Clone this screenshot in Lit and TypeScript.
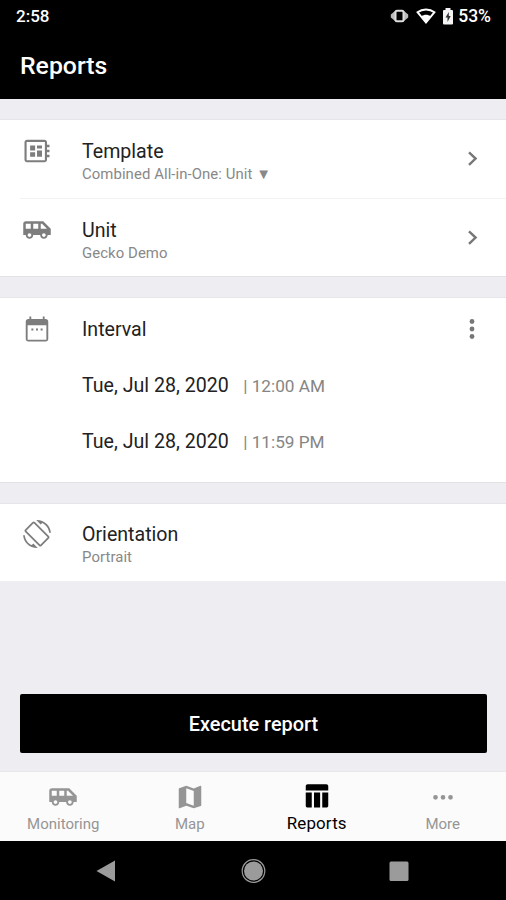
import { LitElement, html, css, svg } from "lit";
import { customElement } from "lit/decorators.js";

const BOARD = "M22 9V7h-2V5c0-1.1-.9-2-2-2H4c-1.1 0-2 .9-2 2v14c0 1.1.9 2 2 2h14c1.1 0 2-.9 2-2v-2h2v-2h-2v-2h2v-2h-2V9h2zm-3.7 10.3h-14.600v-14.600h14.600v14.600zM6.500 13h4v3.500h-4zm5.500-5.500h4v2.500h-4zM6.500 7.500h4v4h-4zm5.500 4h4v5h-4z";
const VAN = "M17 5H3c-1.100 0-2 .89-2 2v9h2c0 1.650 1.340 3 3 3s3-1.350 3-3h5.500c0 1.650 1.340 3 3 3s3-1.350 3-3H23v-5l-6-6zM3 11V7h4v4H3zm3 6.500c-.83 0-1.500-.67-1.500-1.500s.67-1.500 1.500-1.500 1.500.67 1.500 1.500-.67 1.500-1.500 1.500zm7-6.500H9V7h4v4zm4.500 6.500c-.83 0-1.500-.67-1.500-1.500s.67-1.500 1.500-1.500 1.500.67 1.500 1.500-.67 1.500-1.500 1.500zM15 11V7h1l4 4h-5z";
const CALENDAR = "M7.500 11.500v1.600h1.600v-1.600zm3.700 0v1.600h1.600v-1.600zm3.700 0v1.600h1.600v-1.600zM19 4h-.900V2h-1.500v2H7.400V2H5.900v2H5c-1.110 0-2 .9-2 2v14c0 1.100.89 2 2 2h14c1.100 0 2-.9 2-2V6c0-1.100-.9-2-2-2zm.500 16.500h-15V9h15v11.500z";
const ROTATE = "M16.480 2.520c3.270 1.550 5.610 4.720 5.970 8.480h1.500C23.440 4.840 18.290 0 12 0l-.66.03 3.810 3.810 1.330-1.320zm-6.250-.77c-.59-.59-1.540-.59-2.120 0L1.750 8.110c-.59.59-.59 1.540 0 2.120l12.020 12.020c.59.59 1.540.59 2.120 0l6.360-6.360c.59-.59.59-1.540 0-2.120L10.230 1.750zm4.600 19.440L2.810 9.170l6.360-6.360 12.020 12.020-6.360 6.360zm-7.310.29C4.250 19.940 1.910 16.760 1.550 13H.05C.56 19.160 5.710 24 12 24l.66-.03-3.810-3.810-1.330 1.320z";
const MAP = "M20.500 3l-.16.03L15 5.100 9 3 3.360 4.900c-.21.07-.36.25-.36.48V20.500c0 .28.22.5.5.5l.16-.03L9 18.900l6 2.100 5.640-1.900c.21-.07.36-.25.36-.48V3.500c0-.28-.22-.5-.5-.5zM15 19l-6-2.110V5l6 2.110V19z";
const TABLE = "M4.500 2.500h15c.8 0 1.500.7 1.500 1.500v3.500H3V4c0-.8.700-1.500 1.500-1.500zM3 9.200h4.800v12H4.500c-.8 0-1.500-.7-1.500-1.500zM9.600 9.200h4.900v12h-4.900zM16.200 9.200H21v10.500c0 .8-.7 1.500-1.500 1.500h-3.300z";
const MORE = "M6 10.300a1.900 1.900 0 1 0 0 3.800 1.900 1.900 0 0 0 0-3.800zM12 10.300a1.900 1.900 0 1 0 0 3.800 1.900 1.900 0 0 0 0-3.800zM18 10.300a1.900 1.900 0 1 0 0 3.800 1.900 1.900 0 0 0 0-3.800z";

const icon = (d: string, size = 30) =>
  html`<svg width=${size} height=${size} viewBox="0 0 24 24" fill="currentColor">${svg`<path fill-rule="evenodd" d=${d}></path>`}</svg>`;

const chevron = html`<svg width="12" height="16" viewBox="0 0 12 16" fill="none" stroke="#777" stroke-width="2.400"><path d="M2 1.300L8.600 7.600L2 13.900"></path></svg>`;

@customElement("app-root")
export class AppRoot extends LitElement {
  static styles = css`
    :host { display: flex; flex-direction: column; height: 900px; background: #eeedf2; font-family: Roboto, "Liberation Sans", sans-serif; color: #222; overflow: hidden; }
    svg { display: block; flex: none; }
    .top { background: #000; color: #fff; height: 99px; flex: none; }
    .status { height: 32px; display: flex; align-items: center; padding: 0 15px 0 16px; font-size: 17px; font-weight: 500; }
    .time { flex: 1; }
    .signals { display: flex; align-items: center; font-size: 17.500px; }
    .vibrate { margin-right: 7px; }
    .wifi { margin-right: 6px; }
    .battery { margin-right: 4px; }
    .heading { margin: 0; padding: 17px 20px 0; font-size: 24.800px; line-height: 34px; font-weight: 500; }
    .card { background: #fff; margin-top: 20px; border-top: 1px solid #e6e5ea; border-bottom: 1px solid #e2e1e6; flex: none; }
    .card.span { padding-bottom: 12px; }
    .card.last { border-bottom-color: #f0eff3; }
    .row { height: 78px; display: flex; box-sizing: border-box; padding-top: 18px; }
    .last .row { height: 77px; padding-top: 17px; }
    .row + .row { margin-left: 20px; border-top: 1px solid #f3f3f3; }
    .row + .row .lead { width: 62px; padding-left: 2px; }
    .lead { width: 82px; padding-left: 22px; box-sizing: border-box; color: #7d7d7d; flex: none; margin-top: -2px; }
    .last .lead { padding-left: 23px; margin-top: -1px; }
    .body { flex: 1; }
    .name { font-size: 19.600px; line-height: 26px; padding-top: 1px; margin-bottom: -1px; }
    .sub { font-size: 14.900px; line-height: 20px; color: #888; letter-spacing: 0.080px; }
    .arrow { padding: 13px 27px 0 0; }
    .dots { padding: 3px 30px 0 0; }
    .row.interval { height: 60px; }
    .when { height: 56px; padding-left: 82px; display: flex; align-items: baseline; line-height: 56px; font-size: 19.600px; }
    .clock { margin-left: 14.500px; font-size: 17.200px; color: #858585; }
    .spacer { flex: 1; }
    .go { height: 59px; flex: none; margin: 0 19px 18px 20px; background: #000; color: #fff; font: 500 19.900px/59px Roboto, sans-serif; border: 0; border-radius: 2px; padding: 1px 0 0; }
    .tabs { height: 70px; flex: none; background: #fbfbfb; border-top: 1px solid #e8e8eb; box-sizing: border-box; display: grid; grid-template-columns: repeat(4, 1fr); }
    .tab { display: flex; flex-direction: column; align-items: center; padding-top: 10px; color: #959595; font-size: 15px; line-height: 20px; gap: 2px; }
    .tab.on { color: #000; font-size: 16.900px; padding: 9px 0 0 1px; letter-spacing: 0.150px; }
    .nav { height: 59px; flex: none; background: #000; }
  `;

  tab(d: string, label: string, on = false) {
    return html`<div class="tab ${on ? "on" : ""}">${icon(d)}<span>${label}</span></div>`;
  }

  render() {
    return html`
      <div class="top">
        <div class="status">
          <span class="time">2:58</span>
          <div class="signals">
            <svg class="vibrate" width="19" height="16" viewBox="0 0 19 16"><path d="M5 3v10L.800 9.500v-3zM14 3v10l4.200-3.500v-3z" fill="#bbb"></path><rect x="5.500" y="2.800" width="8" height="10.400" rx="1.500" fill="#000" stroke="#ddd" stroke-width="2"></rect></svg>
            <svg class="wifi" width="20" height="16" viewBox="0 0 20 16"><path d="M1.500 4.200C6.500.5 13.500.5 18.500 4.200L10 14.500z" fill="none" stroke="#fff" stroke-width="1.900"></path><path d="M5.500 8.200C8 6.200 12 6.200 14.500 8.200L10 14.500z" fill="#fff"></path></svg>
            <svg class="battery" width="12" height="17" viewBox="0 0 12 17"><path d="M3.500 0h5v2H10a1 1 0 0 1 1 1v12.500a1 1 0 0 1-1 1H2a1 1 0 0 1-1-1V3a1 1 0 0 1 1-1h1.500z" fill="#f4f4f4"></path><path d="M6.800 4L3.500 9.500h2V14l3.200-6h-1.900z" fill="#333"></path></svg>
            <span>53%</span>
          </div>
        </div>
        <h1 class="heading">Reports</h1>
      </div>
      <section class="card">
        <div class="row"><div class="lead">${icon(BOARD)}</div><div class="body"><div class="name">Template</div><div class="sub">Combined All-in-One: Unit ▼</div></div><div class="arrow">${chevron}</div></div>
        <div class="row"><div class="lead">${icon(VAN)}</div><div class="body"><div class="name">Unit</div><div class="sub">Gecko Demo</div></div><div class="arrow">${chevron}</div></div>
      </section>
      <section class="card span">
        <div class="row interval"><div class="lead">${icon(CALENDAR)}</div><div class="body"><div class="name">Interval</div></div>
          <div class="dots"><svg width="8" height="20" viewBox="0 0 8 20" fill="#777"><circle cx="4" cy="2.500" r="2.400"></circle><circle cx="4" cy="10" r="2.400"></circle><circle cx="4" cy="17.500" r="2.400"></circle></svg></div></div>
        <div class="when"><span>Tue, Jul 28, 2020</span><span class="clock">| 12:00 AM</span></div>
        <div class="when"><span>Tue, Jul 28, 2020</span><span class="clock">| 11:59 PM</span></div>
      </section>
      <section class="card last">
        <div class="row"><div class="lead">${icon(ROTATE, 28)}</div><div class="body"><div class="name">Orientation</div><div class="sub">Portrait</div></div></div>
      </section>
      <div class="spacer"></div>
      <button class="go">Execute report</button>
      <nav class="tabs">${this.tab(VAN, "Monitoring")}${this.tab(MAP, "Map")}${this.tab(TABLE, "Reports", true)}${this.tab(MORE, "More")}</nav>
      <div class="nav"><svg width="506" height="59" viewBox="0 0 506 59" fill="#9b9b9b"><path d="M96.500 30L115 19.500v21z"></path><circle cx="253.500" cy="30" r="9.500"></circle><circle cx="253.500" cy="30" r="11.300" fill="none" stroke="#9b9b9b" stroke-width="1.200"></circle><rect x="389.500" y="20.500" width="19" height="19.500" rx="1.500"></rect></svg></div>
    `;
  }
}
